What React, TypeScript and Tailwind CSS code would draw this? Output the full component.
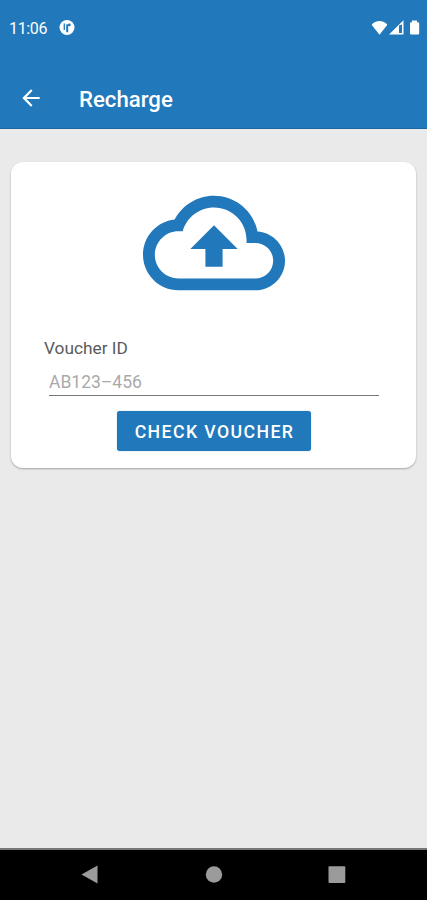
function StatusBar() {
  return (
    <div className="flex h-[55px] items-center justify-between pl-[9px] pr-[6px]">
      <div className="flex items-center gap-[12px]">
        <span className="mt-[2px] text-[16px] leading-5 tracking-[-0.35px]">11:06</span>
        <svg className="h-4 w-4" viewBox="0 0 16 16">
          <circle cx="8" cy="7.5" r="7.5" fill="#fff" />
          <path d="M5.300 3.600v6.400" stroke="#2178bb" strokeWidth="1.3" fill="none" />
          <path d="M8.200 12.200V4.300" stroke="#2178bb" strokeWidth="2" fill="none" />
          <circle cx="10.300" cy="4.900" r="1.400" fill="#2178bb" />
        </svg>
      </div>
      <svg className="h-[17px] w-[50px]" viewBox="0 0 50 17" fill="#fff">
        <path d="M8.500 15.800 1.200 6.600c-.5-.7-.4-1.400.3-1.900C5.600 1 11.400 1 15.500 4.700c.7.5.8 1.200.3 1.900z" />
        <path fillRule="evenodd" d="M18 15.500 32.500 1.300v14.200zM28 6.500v7.500h3V5.500z" />
        <path d="M41 1.500h5v1.700h1a1.200 1.200 0 0 1 1.200 1.200v9.900a1.200 1.200 0 0 1-1.200 1.200h-6.800a1.200 1.200 0 0 1-1.200-1.200V4.400a1.200 1.200 0 0 1 1.200-1.200H41z" />
      </svg>
    </div>
  );
}

function Toolbar() {
  return (
    <div className="flex h-[73px] items-center pl-[18px] pt-[13px]">
      <svg className="h-[26px] w-[26px]" viewBox="0 0 24 24" fill="#fff">
        <path d="M20 11H7.830l5.590-5.590L12 4l-8 8 8 8 1.410-1.410L7.830 13H20z" />
      </svg>
      <h1 className="ml-[35px] mt-px text-[22.200px] font-medium leading-7">Recharge</h1>
    </div>
  );
}

function VoucherCard() {
  return (
    <main className="mx-[11px] mt-[33px] flex h-[306px] flex-col items-center rounded-[12px] bg-white pt-[10px] shadow-[0_1px_2px_rgba(0,0,0,0.3)]">
      <svg className="h-[142px] w-[142px]" viewBox="0 0 24 24" fill="#2178bb">
        <path d="M19.350 10.040C18.670 6.590 15.640 4 12 4 9.110 4 6.600 5.640 5.350 8.040 2.340 8.360 0 10.910 0 14c0 3.310 2.690 6 6 6h13c2.760 0 5-2.240 5-5 0-2.640-2.050-4.780-4.650-4.960zM19 18H6c-2.210 0-4-1.790-4-4s1.790-4 4-4h.710C7.370 7.690 9.480 6 12 6c3.040 0 5.500 2.460 5.500 5.500v.500H19c1.660 0 3 1.340 3 3s-1.340 3-3 3z" />
        <path d="M8 13h2.550v3h2.900v-3H16l-4-4z" />
      </svg>

      <div className="mt-[22px] w-full pl-[33px] pr-[38px]">
        <label htmlFor="voucher" className="block text-[17.300px] leading-6 text-[#5a5a5a]">Voucher ID</label>
        <input
          id="voucher"
          placeholder="AB123–456"
          className="ml-[5px] mt-[6px] block h-[30px] w-[330px] border-b border-[#777] bg-transparent p-0 pt-[3px] text-[17.500px] text-[#505050] outline-none placeholder:text-[#aaa]"
        />
      </div>

      <button className="mt-[15px] h-[40px] w-[194px] rounded-[3px] bg-[#2178bb] pl-[2px] pt-[2px] text-[17.700px] font-medium tracking-[1.400px] text-white shadow-[0_0_1px_rgba(33,120,187,0.8)]">
        CHECK VOUCHER
      </button>
    </main>
  );
}

function NavigationBar() {
  return (
    <nav className="mt-auto h-[52px] border-t-2 border-[#777] bg-black">
      <svg className="h-[50px] w-[427px]" viewBox="0 0 427 50" fill="#9b9b9b">
        <path d="M81.500 24.500 97.500 15.500v18z" />
        <circle cx="214" cy="24.500" r="8.200" />
        <rect x="328.500" y="16.200" width="16.800" height="16.800" rx="1" />
      </svg>
    </nav>
  );
}

export default function App() {
  return (
    <div className="flex h-[900px] w-[427px] flex-col overflow-hidden bg-[#eaeaea] font-[Roboto,'Liberation_Sans',sans-serif]">
      <header className="h-[129px] shrink-0 border-b border-[#1b65a0] bg-[#2178bb] text-white">
        <StatusBar />
        <Toolbar />
      </header>
      <VoucherCard />
      <NavigationBar />
    </div>
  );
}
